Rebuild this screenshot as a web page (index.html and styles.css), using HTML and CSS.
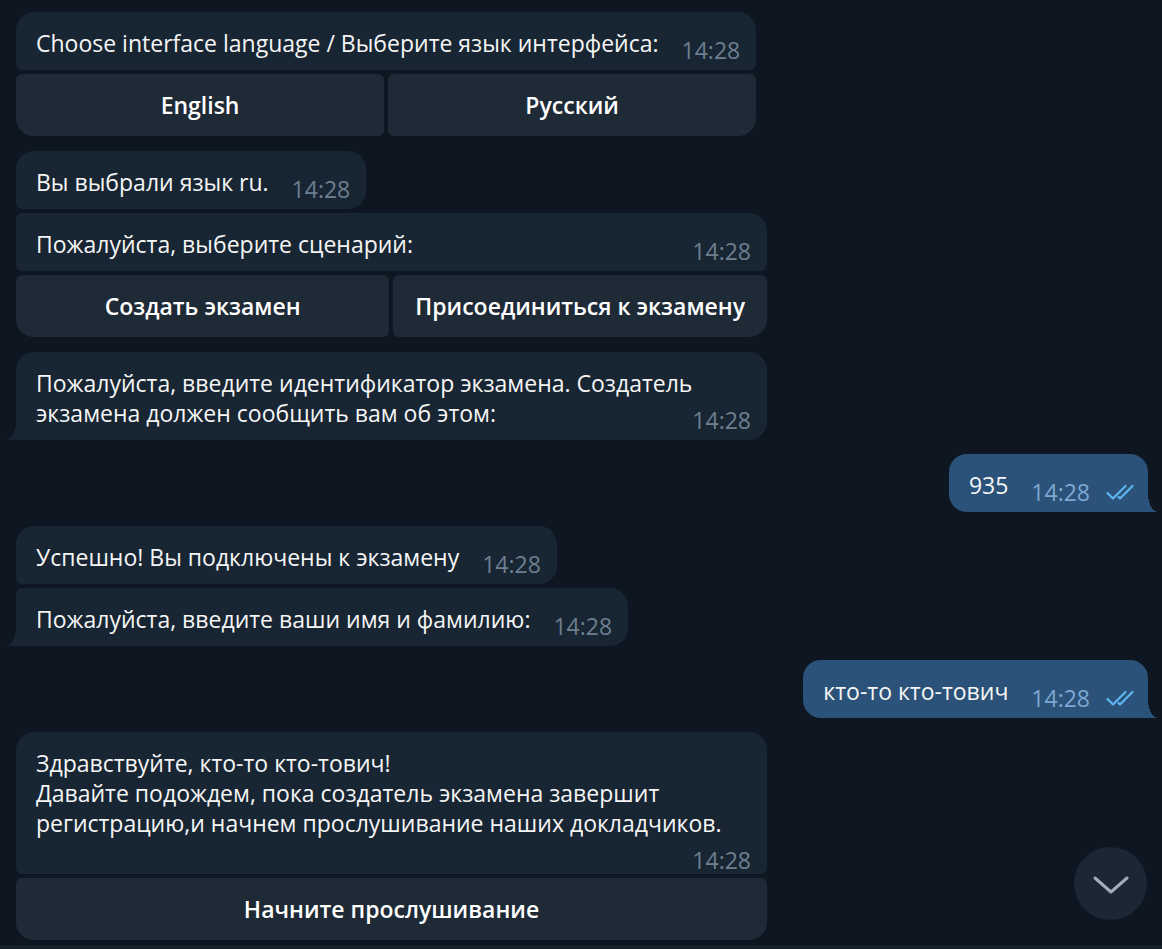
FILE: index.html
```html
<!DOCTYPE html>
<html lang="ru">
<head>
<meta charset="utf-8">
<title>Chat</title>
<link rel="stylesheet" href="styles.css">
</head>
<body>
<div class="app">
  <div class="chat">
    <div class="row in">
      <div class="group">
        <div class="bubble b-kb"><span class="text">Choose interface language / Выберите язык интерфейса:</span><span class="time">14:28</span></div>
        <div class="kb">
          <button class="key">English</button>
          <button class="key">Русский</button>
        </div>
      </div>
    </div>

    <div class="row in after-kb">
      <div class="bubble b-gbot"><span class="text">Вы выбрали язык ru.</span><span class="time">14:28</span></div>
    </div>

    <div class="row in grouped">
      <div class="group">
        <div class="bubble b-gtop b-kb"><span class="text">Пожалуйста, выберите сценарий:</span><span class="time">14:28</span></div>
        <div class="kb">
          <button class="key">Создать экзамен</button>
          <button class="key">Присоединиться к экзамену</button>
        </div>
      </div>
    </div>

    <div class="row in after-kb">
      <div class="bubble tail-l"><span class="text">Пожалуйста, введите идентификатор экзамена. Создатель экзамена должен сообщить вам об этом:</span><span class="time">14:28</span></div>
    </div>

    <div class="row out">
      <div class="bubble tail-r"><span class="text">935</span><span class="time">14:28<svg class="check" width="31" height="17" viewBox="0 0 31 17"><polyline points="1.5,9 7,14.5 19.5,2" fill="none" stroke="currentColor" stroke-width="2.2" stroke-linecap="round" stroke-linejoin="round"/><polyline points="12.5,13 14,14.5 26.5,2" fill="none" stroke="currentColor" stroke-width="2.2" stroke-linecap="round" stroke-linejoin="round"/></svg></span></div>
    </div>

    <div class="row in">
      <div class="bubble b-gbot"><span class="text">Успешно! Вы подключены к экзамену</span><span class="time">14:28</span></div>
    </div>

    <div class="row in grouped">
      <div class="bubble b-gtop tail-l"><span class="text">Пожалуйста, введите ваши имя и фамилию:</span><span class="time">14:28</span></div>
    </div>

    <div class="row out">
      <div class="bubble tail-r"><span class="text">кто-то кто-тович</span><span class="time">14:28<svg class="check" width="31" height="17" viewBox="0 0 31 17"><polyline points="1.5,9 7,14.5 19.5,2" fill="none" stroke="currentColor" stroke-width="2.2" stroke-linecap="round" stroke-linejoin="round"/><polyline points="12.5,13 14,14.5 26.5,2" fill="none" stroke="currentColor" stroke-width="2.2" stroke-linecap="round" stroke-linejoin="round"/></svg></span></div>
    </div>

    <div class="row in">
      <div class="group">
        <div class="bubble b-kb"><span class="text">Здравствуйте, кто-то кто-тович!<br>Давайте подождем, пока создатель экзамена завершит регистрацию,и начнем прослушивание наших докладчиков.</span><span class="time">14:28</span></div>
        <div class="kb kb-1">
          <button class="key">Начните прослушивание</button>
        </div>
      </div>
    </div>

    <button class="scroll-down" aria-label="Вниз">
      <svg width="36" height="20" viewBox="0 0 36 20"><polyline points="2,3 18,17 34,3" fill="none" stroke="currentColor" stroke-width="3" stroke-linecap="round" stroke-linejoin="round"/></svg>
    </button>
  </div>
  <div class="footer"></div>
</div>
</body>
</html>
```

FILE: styles.css
```css
html, body {
  margin: 0;
  padding: 0;
}

body {
  background: #0e1621;
  font-family: "Open Sans", "Noto Sans", sans-serif;
  color: #f5f5f5;
}

.app {
  height: 949px;
  display: flex;
  flex-direction: column;
  overflow: hidden;
}

.chat {
  position: relative;
  height: 944px;
  flex: none;
  box-sizing: border-box;
  padding: 12px 14px 0 16px;
  overflow: hidden;
}

.footer {
  flex: 1;
  background: #17212b;
  border-top: 1px solid #0b1118;
}

.row {
  display: flex;
  margin-top: 14px;
}

.row:first-child {
  margin-top: 0;
}

.row.out {
  justify-content: flex-end;
}

.row.grouped {
  margin-top: 4px;
}

.row.after-kb {
  margin-top: 15px;
}

.group {
  display: flex;
  flex-direction: column;
  width: fit-content;
  max-width: 751px;
}

.bubble {
  box-sizing: border-box;
  width: fit-content;
  max-width: 751px;
  padding: 16px 16px 12px 20px;
  background: #182533;
  border-radius: 18px;
  font-size: 23px;
  line-height: 30px;
  color: #f5f5f5;
}

.group .bubble {
  width: auto;
}

.time {
  float: right;
  display: flex;
  align-items: center;
  gap: 16px;
  margin: 10px 0 -10px 23px;
  font-size: 23px;
  line-height: 24px;
  color: #6d7f8f;
}

.out .bubble {
  background: #2b5278;
  padding-right: 11px;
}

.out .time {
  color: #7da8d3;
}

.check {
  color: #5fb4f2;
  display: block;
}

/* corner variants */
.b-kb {
  border-bottom-left-radius: 6px;
  border-bottom-right-radius: 6px;
}

.b-gbot {
  border-bottom-left-radius: 6px;
}

.b-gtop {
  border-top-left-radius: 6px;
}

.tail-l {
  position: relative;
  border-bottom-left-radius: 0;
}

.tail-l::before {
  content: "";
  position: absolute;
  left: -10px;
  bottom: 0;
  width: 10px;
  height: 18px;
  background: radial-gradient(10px 18px at 0 0, transparent 98%, #182533 100%);
}

.tail-r {
  position: relative;
  border-bottom-right-radius: 0;
}

.tail-r::after {
  content: "";
  position: absolute;
  right: -10px;
  bottom: 0;
  width: 10px;
  height: 18px;
  background: radial-gradient(10px 18px at 100% 0, transparent 98%, #2b5278 100%);
}

/* inline keyboard */
.kb {
  display: grid;
  grid-template-columns: 1fr 1fr;
  gap: 4px;
  margin-top: 4px;
}

.kb-1 {
  grid-template-columns: 1fr;
}

.key {
  height: 62px;
  padding: 0 22px;
  border: 0;
  border-radius: 6px;
  background: #1f2a37;
  color: #ffffff;
  font-family: "Open Sans", "Noto Sans", sans-serif;
  font-size: 23px;
  font-weight: 600;
  white-space: nowrap;
}

.kb .key:first-child {
  border-bottom-left-radius: 18px;
}

.kb .key:last-child {
  border-bottom-right-radius: 18px;
}

/* scroll to bottom */
.scroll-down {
  position: absolute;
  right: 15px;
  bottom: 24px;
  width: 73px;
  height: 73px;
  padding: 0;
  border: 0;
  border-radius: 50%;
  background: #1b2734;
  color: #a3adb8;
  display: flex;
  align-items: center;
  justify-content: center;
}

.scroll-down svg {
  display: block;
  margin-top: 2px;
}
```
